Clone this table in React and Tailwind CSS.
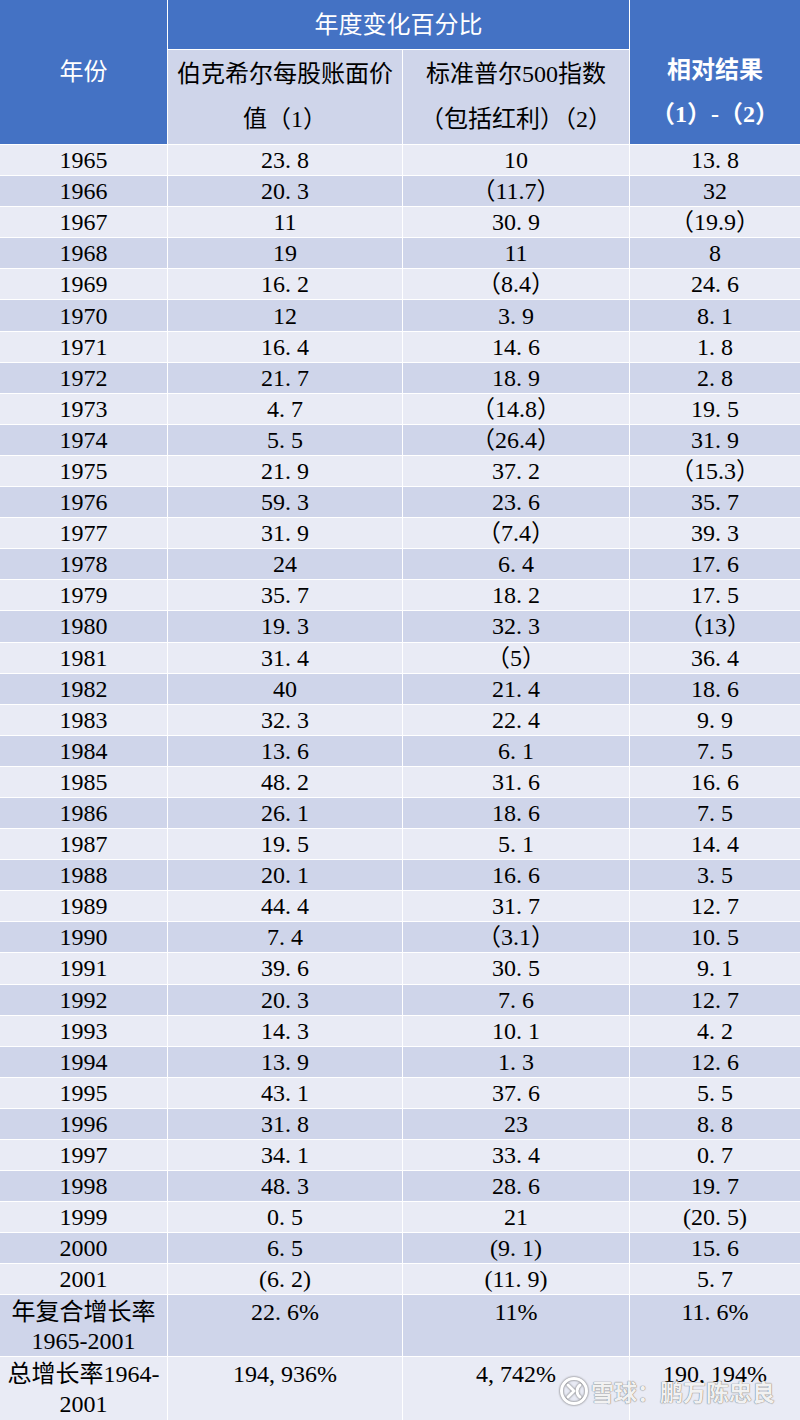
import React from "react";

const rows = [
  ["1965", "23.8", "10", "13.8"],
  ["1966", "20.3", "（11.7）", "32"],
  ["1967", "11", "30.9", "（19.9）"],
  ["1968", "19", "11", "8"],
  ["1969", "16.2", "（8.4）", "24.6"],
  ["1970", "12", "3.9", "8.1"],
  ["1971", "16.4", "14.6", "1.8"],
  ["1972", "21.7", "18.9", "2.8"],
  ["1973", "4.7", "（14.8）", "19.5"],
  ["1974", "5.5", "（26.4）", "31.9"],
  ["1975", "21.9", "37.2", "（15.3）"],
  ["1976", "59.3", "23.6", "35.7"],
  ["1977", "31.9", "（7.4）", "39.3"],
  ["1978", "24", "6.4", "17.6"],
  ["1979", "35.7", "18.2", "17.5"],
  ["1980", "19.3", "32.3", "（13）"],
  ["1981", "31.4", "（5）", "36.4"],
  ["1982", "40", "21.4", "18.6"],
  ["1983", "32.3", "22.4", "9.9"],
  ["1984", "13.6", "6.1", "7.5"],
  ["1985", "48.2", "31.6", "16.6"],
  ["1986", "26.1", "18.6", "7.5"],
  ["1987", "19.5", "5.1", "14.4"],
  ["1988", "20.1", "16.6", "3.5"],
  ["1989", "44.4", "31.7", "12.7"],
  ["1990", "7.4", "（3.1）", "10.5"],
  ["1991", "39.6", "30.5", "9.1"],
  ["1992", "20.3", "7.6", "12.7"],
  ["1993", "14.3", "10.1", "4.2"],
  ["1994", "13.9", "1.3", "12.6"],
  ["1995", "43.1", "37.6", "5.5"],
  ["1996", "31.8", "23", "8.8"],
  ["1997", "34.1", "33.4", "0.7"],
  ["1998", "48.3", "28.6", "19.7"],
  ["1999", "0.5", "21", "(20.5)"],
  ["2000", "6.5", "(9.1)", "15.6"],
  ["2001", "(6.2)", "(11.9)", "5.7"],
];

// half-width punctuation gets a full digit cell, like SimSun
const Num = ({ value }) => {
  if (value.includes("（")) return <span>{value}</span>;
  return (
    <span>
      {value.split("").map((ch, i) =>
        ch === "." || ch === "," ? (
          <span key={i} className="inline-block w-[0.5em] text-left">
            {ch}
          </span>
        ) : (
          <span key={i}>{ch}</span>
        )
      )}
    </span>
  );
};

const Logo = () => (
  <svg width="30" height="30" viewBox="0 0 30 30" className="drop-shadow-[0_0_1px_rgba(80,80,80,0.9)]">
    <circle cx="15" cy="15" r="12.5" fill="none" stroke="white" strokeWidth="3" />
    <path d="M9 9 L15 15 L9 21" fill="none" stroke="white" strokeWidth="3" strokeLinecap="round" strokeLinejoin="round" />
    <path d="M21 9 C17 12 17 18 21 21" fill="none" stroke="white" strokeWidth="3" strokeLinecap="round" />
  </svg>
);

export default function App() {
  return (
    <div className="relative w-[800px] h-[1420px] overflow-hidden bg-white font-[family-name:Liberation_Serif,Noto_Sans_CJK_SC,serif] text-[24px] text-black">
      <div className="grid grid-cols-[167px_234px_226px_1fr] gap-px bg-white">
        {/* Header */}
        <div className="row-span-2 bg-[#4472C4] text-white flex items-center justify-center h-[144px]">
          年份
        </div>
        <div className="col-span-2 bg-[#4472C4] text-white flex items-center justify-center h-[49px]">
          年度变化百分比
        </div>
        <div className="row-span-2 bg-[#4472C4] text-white font-bold flex flex-col items-center justify-end pb-[8px] leading-[44px]">
          <div>相对结果</div>
          <div>（1）-（2）</div>
        </div>
        <div className="bg-[#CFD5EA] h-[94px] flex flex-col items-center justify-center leading-[45px]">
          <div>伯克希尔每股账面价</div>
          <div>值（1）</div>
        </div>
        <div className="bg-[#CFD5EA] h-[94px] flex flex-col items-center justify-center leading-[45px]">
          <div>标准普尔500指数</div>
          <div>（包括红利）（2）</div>
        </div>

        {/* Data rows */}
        {rows.map((r, i) => {
          const bg = i % 2 === 0 ? "bg-[#E9EBF5]" : "bg-[#CFD5EA]";
          return (
            <React.Fragment key={r[0]}>
              <div className={`${bg} h-[30.1px] flex items-center justify-center leading-none`}>{r[0]}</div>
              <div className={`${bg} h-[30.1px] flex items-center justify-center leading-none`}>
                <Num value={r[1]} />
              </div>
              <div className={`${bg} h-[30.1px] flex items-center justify-center leading-none`}>
                <Num value={r[2]} />
              </div>
              <div className={`${bg} h-[30.1px] flex items-center justify-center leading-none`}>
                <Num value={r[3]} />
              </div>
            </React.Fragment>
          );
        })}

        {/* Totals */}
        <div className="bg-[#CFD5EA] h-[61px] text-center leading-[29px] pt-[3px]">
          年复合增长率
          <br />
          1965-2001
        </div>
        <div className="bg-[#CFD5EA] h-[61px] text-center leading-[29px] pt-[3px]">
          <Num value="22.6%" />
        </div>
        <div className="bg-[#CFD5EA] h-[61px] text-center leading-[29px] pt-[3px]">
          <Num value="11%" />
        </div>
        <div className="bg-[#CFD5EA] h-[61px] text-center leading-[29px] pt-[3px]">
          <Num value="11.6%" />
        </div>

        <div className="bg-[#E9EBF5] h-[64px] text-center leading-[30px] pt-[2px]">
          总增长率1964-
          <br />
          2001
        </div>
        <div className="bg-[#E9EBF5] h-[64px] text-center leading-[30px] pt-[2px]">
          <Num value="194,936%" />
        </div>
        <div className="bg-[#E9EBF5] h-[64px] text-center leading-[30px] pt-[2px]">
          <Num value="4,742%" />
        </div>
        <div className="bg-[#E9EBF5] h-[64px] text-center leading-[30px] pt-[2px]">
          <Num value="190,194%" />
        </div>
      </div>

      {/* Watermark */}
      <div className="absolute left-[559px] top-[1376px] flex items-center gap-[2px] text-white/90 font-[family-name:Noto_Sans_CJK_SC,sans-serif] text-[23px] font-bold leading-none [text-shadow:0_0_1px_#777,0_0_1px_#777]">
        <Logo />
        <span>雪球：鹏万陈忠良</span>
      </div>
    </div>
  );
}
